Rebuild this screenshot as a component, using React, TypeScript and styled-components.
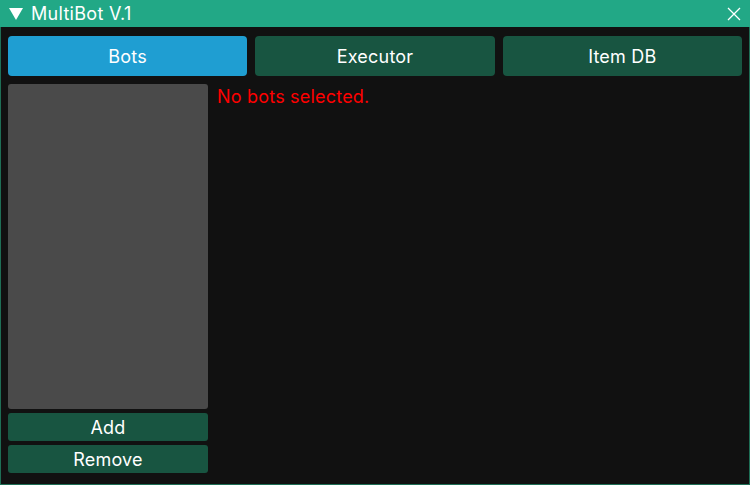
import React from "react";
import styled, { createGlobalStyle } from "styled-components";

const Global = createGlobalStyle`
  html, body { margin: 0; padding: 0; background: #111111; }
  body { font-family: "Inter", "Open Sans", sans-serif; }
`;

const Window = styled.div`
  width: 750px;
  height: 485px;
  box-sizing: border-box;
  display: flex;
  flex-direction: column;
  background: #111111;
  border: 1px solid #1e6e55;
  border-top: none;
`;

const TitleBar = styled.div`
  height: 27px;
  margin: 0 -1px;
  background: #22a886;
  display: flex;
  align-items: center;
  padding: 0 9px;
  gap: 8px;
  color: #ffffff;
  font-size: 18px;
`;

const Title = styled.span`
  flex: 1;
  letter-spacing: 0.3px;
`;

const Body = styled.div`
  flex: 1;
  display: flex;
  flex-direction: column;
  padding: 9px 7px 11px 7px;
  gap: 8px;
  min-height: 0;
`;

const Tabs = styled.div`
  display: grid;
  grid-template-columns: repeat(3, 1fr);
  gap: 8px;
  height: 40px;
`;

const Tab = styled.button<{ $active?: boolean }>`
  border: none;
  border-radius: 4px;
  background: ${(p) => (p.$active ? "#1f9ed2" : "#185541")};
  color: #ffffff;
  font-family: inherit;
  font-size: 18px;
  letter-spacing: 0.2px;
  padding: 1px 0 0 0;
`;

const Content = styled.div`
  flex: 1;
  display: flex;
  gap: 9px;
  min-height: 0;
`;

const Sidebar = styled.div`
  width: 200px;
  display: flex;
  flex-direction: column;
  gap: 4px;
`;

const List = styled.div`
  flex: 1;
  background: #4a4a4a;
  border-radius: 3px;
`;

const SideButton = styled.button`
  height: 28px;
  border: none;
  border-radius: 3px;
  background: #185541;
  color: #ffffff;
  font-family: inherit;
  font-size: 18px;
  letter-spacing: 0.2px;
  padding: 1px 0 0 0;
`;

const Message = styled.div`
  color: #ff0000;
  font-size: 18px;
  letter-spacing: 0.2px;
  padding-top: 2px;
`;

export default function App() {
  return (
    <>
      <Global />
      <Window>
        <TitleBar>
          <svg width="14" height="12" viewBox="0 0 14 12">
            <polygon points="0,0 14,0 7,12" fill="#ffffff" />
          </svg>
          <Title>MultiBot V.1</Title>
          <svg width="14" height="14" viewBox="0 0 14 14">
            <path d="M1 1 L13 13 M13 1 L1 13" stroke="#ffffff" strokeWidth="1.3" />
          </svg>
        </TitleBar>
        <Body>
          <Tabs>
            <Tab $active>Bots</Tab>
            <Tab>Executor</Tab>
            <Tab>Item DB</Tab>
          </Tabs>
          <Content>
            <Sidebar>
              <List />
              <SideButton>Add</SideButton>
              <SideButton>Remove</SideButton>
            </Sidebar>
            <Message>No bots selected.</Message>
          </Content>
        </Body>
      </Window>
    </>
  );
}
